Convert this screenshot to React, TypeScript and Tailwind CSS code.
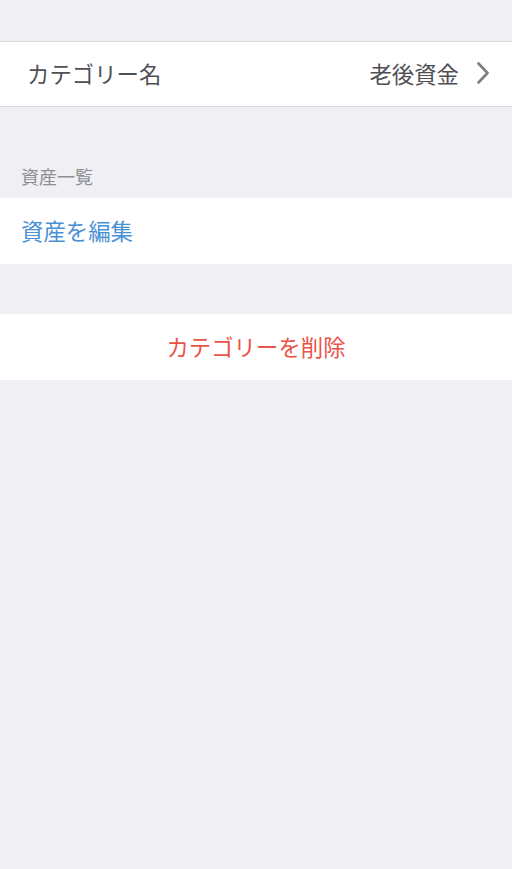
import React from 'react';

const font = { fontFamily: '"Noto Sans CJK JP", "Noto Sans", sans-serif' };

function Chevron() {
  return (
    <svg width="14" height="22" viewBox="0 0 14 22" className="ml-[17px]">
      <path d="M2.5 1.5 L11.5 11 L2.5 20.5" fill="none" stroke="#7d7d83" strokeWidth="2.6" strokeLinecap="round" strokeLinejoin="round" />
    </svg>
  );
}

export default function App() {
  return (
    <div className="min-h-[869px] bg-[#efeff4] leading-none" style={font}>
      <div className="h-[41px]" />
      <div className="flex h-[66px] items-center justify-between border-y border-[#dadade] bg-white pb-[2px] pl-[27px] pr-[22px]">
        <span className="text-[22.4px] text-[#505054]">カテゴリー名</span>
        <div className="flex items-center">
          <span className="text-[22.4px] text-[#505054]">老後資金</span>
          <Chevron />
        </div>
      </div>
      <div className="flex h-[91px] items-end pb-[13px] pl-[21px]">
        <span className="text-[18px] text-[#8e8e93]">資産一覧</span>
      </div>
      <div className="flex h-[66px] items-center bg-white pb-[2px] pl-[21px]">
        <span className="text-[22.4px] text-[#4a90d6]">資産を編集</span>
      </div>
      <div className="h-[50px]" />
      <div className="flex h-[66px] items-center justify-center bg-white pb-[2px]">
        <span className="text-[22.4px] text-[#ec5348]">カテゴリーを削除</span>
      </div>
    </div>
  );
}
